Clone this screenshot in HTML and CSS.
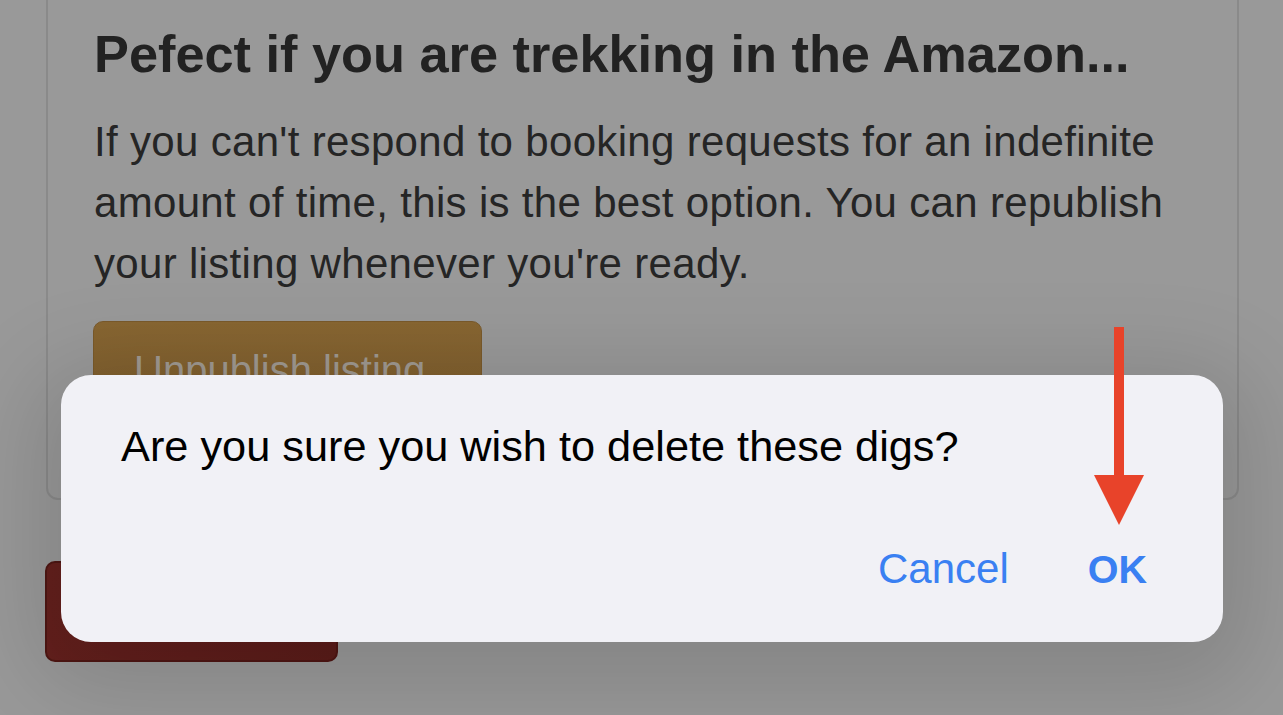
FILE: index.html
```html
<!DOCTYPE html>
<html lang="en">
<head>
<meta charset="utf-8">
<title>Delete digs</title>
<link rel="stylesheet" href="styles.css">
</head>
<body>
<div class="page">
  <section class="card">
    <h2 class="card-title">Pefect if you are trekking in the Amazon...</h2>
    <p class="card-text">If you can't respond to booking requests for an indefinite amount of time, this is the best option. You can republish your listing whenever you're ready.</p>
    <button class="btn btn-unpublish" type="button">Unpublish listing</button>
  </section>
  <button class="btn btn-delete" type="button">Delete</button>
</div>

<div class="alert" role="alertdialog">
  <p class="alert-message">Are you sure you wish to delete these digs?</p>
  <div class="alert-actions">
    <span class="alert-action">Cancel</span>
    <span class="alert-action alert-action-strong">OK</span>
  </div>
</div>

<svg class="arrow" width="50" height="198" viewBox="0 0 50 198" aria-hidden="true">
  <rect x="20" y="0" width="10" height="150" fill="#e8432a"/>
  <polygon points="0,148 50,148 25,198" fill="#e8432a"/>
</svg>
</body>
</html>
```

FILE: styles.css
```css
html, body {
  margin: 0;
  padding: 0;
}

body {
  width: 1283px;
  height: 715px;
  overflow: hidden;
  background: #999999;
  font-family: "Liberation Sans", Arial, sans-serif;
  position: relative;
}

.page {
  display: flex;
  flex-direction: column;
  align-items: flex-start;
  padding-left: 45px;
}

.card {
  box-sizing: border-box;
  width: 1193px;
  margin-left: 1px;
  border: 2px solid #8a8a8a;
  border-top: none;
  border-radius: 0 0 12px 12px;
  padding: 24px 40px 0 46px;
  height: 500px;
  display: flex;
  flex-direction: column;
  align-items: flex-start;
}

.card-title {
  margin: 0;
  font-size: 52.3px;
  line-height: 60px;
  font-weight: 700;
  color: #222222;
}

.card-text {
  margin: 27px 0 0;
  width: 1090px;
  font-size: 42px;
  line-height: 61px;
  letter-spacing: 0.32px;
  color: #252525;
}

.btn {
  font-family: "Liberation Sans", Arial, sans-serif;
  border-radius: 10px;
  cursor: pointer;
}

.btn-unpublish {
  margin-top: 27px;
  margin-left: -1px;
  width: 389px;
  height: 96px;
  padding: 0 0 0 40px;
  text-align: left;
  font-size: 40px;
  line-height: 96px;
  color: #a09a92;
  background: linear-gradient(#886632, #7d5d2d);
  border: 1px solid #7a5a2b;
}

.btn-delete {
  margin-top: 61px;
  width: 293px;
  height: 101px;
  font-size: 40px;
  color: #8a5a58;
  background: linear-gradient(90deg, #65201d, #5b1c19);
  border: 2px solid #4f1613;
}

.alert {
  position: absolute;
  left: 61px;
  top: 375px;
  width: 1162px;
  height: 267px;
  box-sizing: border-box;
  padding: 47px 76px 0 60px;
  background: #f1f1f6;
  border-radius: 30px;
  box-shadow: 0 20px 90px 30px rgba(0, 0, 0, 0.13);
  display: flex;
  flex-direction: column;
}

.alert-message {
  margin: 0;
  font-size: 43.3px;
  color: #000000;
}

.alert-actions {
  margin-top: 74px;
  display: flex;
  justify-content: flex-end;
  align-items: baseline;
  gap: 79px;
}

.alert-action {
  font-size: 42px;
  color: #3a80f2;
}

.alert-action-strong {
  font-weight: 700;
  font-size: 39.5px;
}

.arrow {
  position: absolute;
  left: 1094px;
  top: 327px;
}
```
